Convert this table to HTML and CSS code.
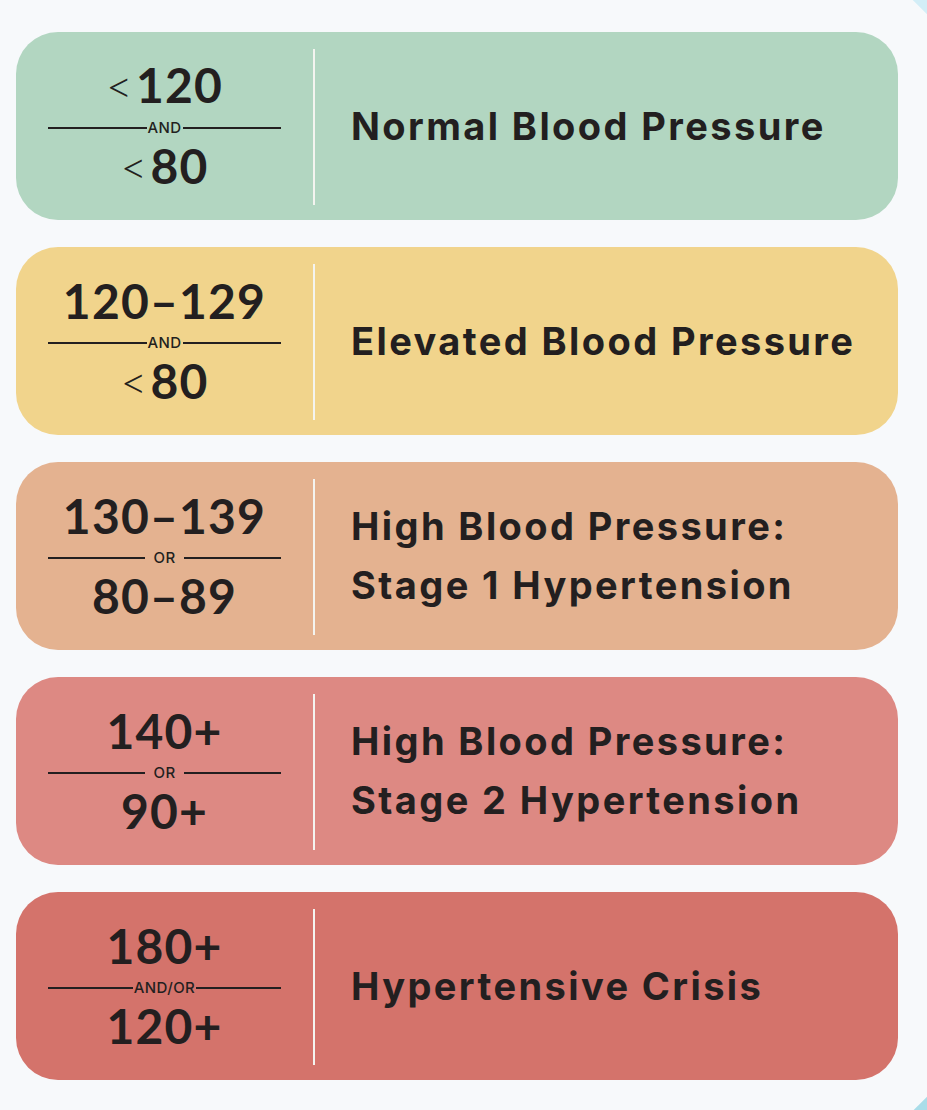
FILE: index.html
```html
<!DOCTYPE html>
<html lang="en">
<head>
<meta charset="utf-8">
<title>Blood Pressure Categories</title>
<link rel="stylesheet" href="styles.css">
</head>
<body>
<div class="corner corner-top"></div>
<div class="corner corner-bottom"></div>
<div class="page">
  <div class="card c1">
    <div class="reading">
      <div class="num"><span class="lt">&lt;</span>120</div>
      <div class="sep"><span class="rule"></span><span class="word">AND</span><span class="rule"></span></div>
      <div class="num"><span class="lt">&lt;</span>80</div>
    </div>
    <div class="divider"></div>
    <div class="label">Normal Blood Pressure</div>
  </div>
  <div class="card c2">
    <div class="reading">
      <div class="num">120–129</div>
      <div class="sep"><span class="rule"></span><span class="word">AND</span><span class="rule"></span></div>
      <div class="num"><span class="lt">&lt;</span>80</div>
    </div>
    <div class="divider"></div>
    <div class="label">Elevated Blood Pressure</div>
  </div>
  <div class="card c3">
    <div class="reading">
      <div class="num">130–139</div>
      <div class="sep"><span class="rule"></span><span class="word spaced">OR</span><span class="rule"></span></div>
      <div class="num">80–89</div>
    </div>
    <div class="divider"></div>
    <div class="label">High Blood Pressure:<br>Stage 1 Hypertension</div>
  </div>
  <div class="card c4">
    <div class="reading">
      <div class="num">140+</div>
      <div class="sep"><span class="rule"></span><span class="word spaced">OR</span><span class="rule"></span></div>
      <div class="num">90+</div>
    </div>
    <div class="divider"></div>
    <div class="label">High Blood Pressure:<br>Stage 2 Hypertension</div>
  </div>
  <div class="card c5">
    <div class="reading">
      <div class="num">180+</div>
      <div class="sep"><span class="rule"></span><span class="word">AND/OR</span><span class="rule"></span></div>
      <div class="num">120+</div>
    </div>
    <div class="divider"></div>
    <div class="label">Hypertensive Crisis</div>
  </div>
</div>
</body>
</html>
```

FILE: styles.css
```css
html, body {
  margin: 0;
  padding: 0;
}
body {
  background: #f7f9fb;
  font-family: "Lato", "Inter", "Liberation Sans", sans-serif;
  color: #231f20;
  width: 927px;
  height: 1110px;
  overflow: hidden;
  position: relative;
}
.corner {
  position: absolute;
  width: 40px;
  height: 40px;
  background: #d3eef7;
  transform: rotate(45deg);
}
.corner-top {
  left: 913px;
  top: -28px;
}
.corner-bottom {
  left: 915px;
  top: 1097px;
  background: #a9dde9;
}
.page {
  position: relative;
  padding: 32px 0 0 16px;
  display: flex;
  flex-direction: column;
  gap: 27px;
  width: 882px;
}
.card {
  height: 188px;
  border-radius: 42px;
  display: flex;
  align-items: center;
}
.c1 { background: #b2d6c1; }
.c2 { background: #f1d48c; }
.c3 { background: #e4b290; }
.c4 { background: #dd8983; }
.c5 { background: #d4736b; }
.reading {
  width: 297px;
  display: flex;
  flex-direction: column;
  align-items: center;
}
.num {
  font-size: 48px;
  font-weight: 700;
  line-height: 52px;
  letter-spacing: 1.2px;
}
.lt {
  font-weight: 300;
  font-size: 46px;
  margin-right: 2px;
}
.sep {
  display: flex;
  align-items: center;
  width: 233px;
  height: 24px;
  padding-top: 4px;
}
.rule {
  flex: 1;
  height: 2px;
  background: #231f20;
}
.word {
  font-family: "Inter", "Lato", sans-serif;
  font-size: 15px;
  font-weight: 500;
  line-height: 16px;
  letter-spacing: 0.4px;
  padding: 0 1px;
}
.word.spaced {
  padding: 0 8px;
}
.divider {
  width: 2px;
  align-self: stretch;
  margin: 17px 0 15px;
  background: #f4f4f0;
}
.label {
  margin-left: 36px;
  font-family: "Inter", "Lato", sans-serif;
  font-size: 38px;
  font-weight: 700;
  line-height: 59px;
  letter-spacing: 2.4px;
}
```
